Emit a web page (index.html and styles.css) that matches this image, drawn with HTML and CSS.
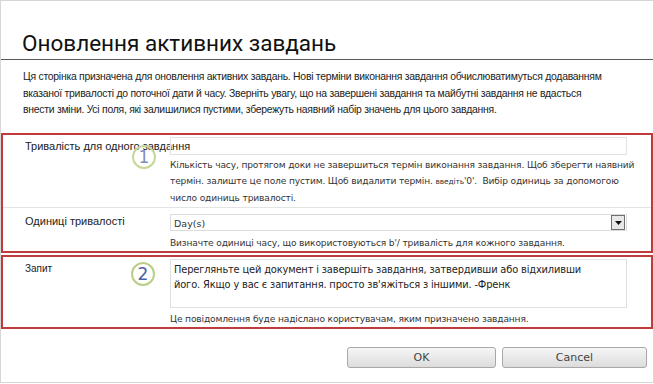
FILE: index.html
```html
<!DOCTYPE html>
<html lang="uk">
<head>
<meta charset="utf-8">
<link rel="stylesheet" href="styles.css">
</head>
<body>
<div class="dialog">
  <h1 class="title">Оновлення активних завдань</h1>
  <p class="intro">Ця сторінка призначена для оновлення активних завдань. Нові терміни виконання завдання обчислюватимуться додаванням<br>вказаної тривалості до поточної дати й часу. Зверніть увагу, що на завершені завдання та майбутні завдання не вдасться<br>внести зміни. Усі поля, які залишилися пустими, збережуть наявний набір значень для цього завдання.</p>

  <div class="box box-one">
    <div class="row row-duration">
      <div class="label">Тривалість для одного завдання</div>
      <div class="field">
        <div class="input"></div>
        <div class="desc">Кількість часу, протягом доки не завершиться термін виконання завдання. Щоб зберегти наявний<br>термін. залиште це поле пустим. Щоб видалити термін. <span class="small">введіть</span>'0'.&nbsp; Вибір одиниць за допомогою<br>число одиниць тривалості.</div>
      </div>
      <div class="badge badge-one">1</div>
    </div>
    <div class="row row-units">
      <div class="label">Одиниці тривалості</div>
      <div class="field">
        <div class="select"><span class="select-value">Day(s)</span><span class="select-btn"><svg width="7" height="4" viewBox="0 0 7 4"><path d="M0 0h7L3.5 4z" fill="#111"/></svg></span></div>
        <div class="desc">Визначте одиниці часу, що використовуються b'/ тривалість для кожного завдання.</div>
      </div>
    </div>
  </div>

  <div class="box box-two">
    <div class="row row-request">
      <div class="label label-small">Запит</div>
      <div class="field">
        <div class="textarea">Перегляньте цей документ і завершіть завдання, затвердивши або відхиливши<br>його. Якщо у вас є запитання. просто зв'яжіться з іншими. -Френк</div>
        <div class="desc">Це повідомлення буде надіслано користувачам, яким призначено завдання.</div>
      </div>
      <div class="badge badge-two">2</div>
    </div>
  </div>

  <div class="actions">
    <button class="btn btn-ok">OK</button>
    <button class="btn btn-cancel">Cancel</button>
  </div>
</div>
</body>
</html>
```

FILE: styles.css
```css
html, body {
  margin: 0;
  padding: 0;
  background: #ffffff;
}
body {
  width: 654px;
  height: 384px;
  overflow: hidden;
  font-family: "Liberation Sans", Arial, sans-serif;
  color: #222;
}
.dialog {
  box-sizing: border-box;
  width: 654px;
  height: 383px;
  border: 1px solid #d6d6d6;
  display: flex;
  flex-direction: column;
}
.title {
  margin: 0;
  padding: 26px 0 0 21px;
  height: 32px;
  font-family: "Liberation Sans Narrow", Roboto, sans-serif;
  font-weight: normal;
  font-size: 22.5px;
  line-height: 32px;
  color: #111;
  border-bottom: 1px solid #5a5a5a;
}
.intro {
  margin: 9px 0 0 0;
  padding-left: 22px;
  font-size: 10.4px;
  line-height: 16.5px;
  letter-spacing: -0.25px;
  color: #222;
  height: 50px;
}
.box {
  border: 2px solid #c0393b;
}
.box-one {
  margin-top: 14px;
}
.box-two {
  margin-top: 2px;
}
.row {
  position: relative;
  display: grid;
  grid-template-columns: 145px 457px;
  padding-left: 22px;
}
.row-duration {
  padding-top: 2px;
  padding-bottom: 1px;
  border-bottom: 1px solid #e4e4e4;
}
.row-units {
  padding-top: 6px;
  padding-bottom: 0;
}
.row-request {
  padding-top: 2px;
  padding-bottom: 0;
}
.label {
  font-size: 11px;
  line-height: 14px;
  padding-top: 2px;
  color: #222;
  white-space: nowrap;
}
.row-units .label {
  padding-top: 0;
}
.label-small {
  font-size: 10px;
  padding-top: 3px;
}
.input {
  box-sizing: border-box;
  height: 18px;
  border: 1px solid #e2e2e2;
}
.desc {
  font-family: "DejaVu Sans", Verdana, sans-serif;
  font-size: 9.1px;
  line-height: 16px;
  letter-spacing: -0.15px;
  color: #333;
  padding-top: 2px;
  white-space: nowrap;
}
.row-units .desc {
  padding-top: 4px;
}
.row-request .desc {
  padding-top: 3px;
}
.small {
  font-size: 7.5px;
}
.select {
  box-sizing: border-box;
  height: 17px;
  border: 1px solid #dcdcdc;
  display: flex;
  align-items: center;
  justify-content: space-between;
}
.select-value {
  font-family: "DejaVu Sans", Verdana, sans-serif;
  font-size: 9.5px;
  color: #333;
  padding-left: 3px;
  padding-top: 2px;
}
.select-btn {
  width: 14px;
  height: 15px;
  box-sizing: border-box;
  border: 1px solid #6f6f6f;
  background: #e8e8e8;
  margin-right: 1px;
  display: flex;
  align-items: center;
  justify-content: center;
}
.textarea {
  box-sizing: border-box;
  height: 49px;
  border: 1px solid #e0e0e0;
  padding: 2px 0 0 3px;
  font-family: "DejaVu Sans", Verdana, sans-serif;
  font-size: 9.85px;
  line-height: 15px;
  letter-spacing: -0.15px;
  color: #222;
  white-space: nowrap;
}
.badge {
  position: absolute;
  box-sizing: border-box;
  width: 24px;
  height: 24px;
  border: 2px solid #b9cf86;
  border-radius: 50%;
  font-family: "DejaVu Sans", sans-serif;
  font-size: 17px;
  line-height: 20px;
  text-align: center;
  color: #4b62a6;
}
.badge-one {
  left: 129px;
  top: 10px;
  color: #7f90b8;
  border-color: #c5d79b;
}
.badge-two {
  left: 128px;
  top: 5px;
}
.actions {
  display: flex;
  justify-content: flex-end;
  gap: 6px;
  padding-right: 6px;
  margin-top: 18px;
}
.btn {
  box-sizing: border-box;
  height: 21px;
  border: 1px solid #a8a8a8;
  border-radius: 3px;
  background: linear-gradient(#f6f6f6, #dcdcdc);
  font-family: "DejaVu Sans", Verdana, sans-serif;
  font-size: 11px;
  color: #444;
  padding: 0;
}
.btn-ok {
  width: 149px;
}
.btn-cancel {
  width: 145px;
}
```
